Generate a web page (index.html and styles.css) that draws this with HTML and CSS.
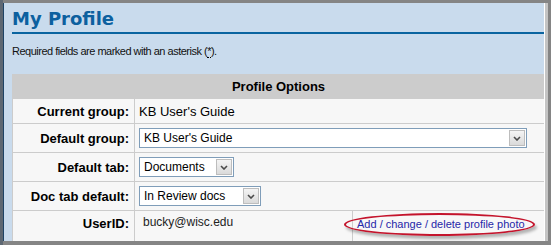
FILE: index.html
```html
<!DOCTYPE html>
<html lang="en">
<head>
    <meta charset="UTF-8">
    <title>My Profile</title>
    <link rel="stylesheet" href="styles.css">
</head>
<body>
    <div class="frame">
        <div class="bezel">
            <div class="page">
                <h1>My Profile</h1>
                <p class="note">Required fields are marked with an asterisk (<abbr title="required">*</abbr>).</p>

                <div class="options">
                    <div class="options-head">Profile Options</div>

                    <div class="label">Current group:</div>
                    <div class="value">KB User's Guide</div>

                    <div class="label">Default group:</div>
                    <div class="value">
                        <div class="select select-wide">
                            <span class="select-text">KB User's Guide</span>
                            <span class="select-btn">
                                <svg width="8" height="5" viewBox="0 0 8 5"><path d="M1 1 L4 4 L7 1" fill="none" stroke="#4a4a4a" stroke-width="1.6"/></svg>
                            </span>
                        </div>
                    </div>

                    <div class="label">Default tab:</div>
                    <div class="value">
                        <div class="select select-tab">
                            <span class="select-text">Documents</span>
                            <span class="select-btn">
                                <svg width="8" height="5" viewBox="0 0 8 5"><path d="M1 1 L4 4 L7 1" fill="none" stroke="#4a4a4a" stroke-width="1.6"/></svg>
                            </span>
                        </div>
                    </div>

                    <div class="label">Doc tab default:</div>
                    <div class="value">
                        <div class="select select-doc">
                            <span class="select-text">In Review docs</span>
                            <span class="select-btn">
                                <svg width="8" height="5" viewBox="0 0 8 5"><path d="M1 1 L4 4 L7 1" fill="none" stroke="#4a4a4a" stroke-width="1.6"/></svg>
                            </span>
                        </div>
                    </div>

                    <div class="label label-last">UserID:</div>
                    <div class="value-user">bucky@wisc.edu</div>
                    <div class="photo-cell">
                        <a class="photo-link" href="#">Add / change / delete profile photo</a>
                        <span class="highlight"></span>
                    </div>
                </div>
            </div>
        </div>
    </div>
</body>
</html>
```

FILE: styles.css
```css
* {
    margin: 0;
    padding: 0;
    box-sizing: border-box;
}

body {
    background: #858585;
    font-family: "Liberation Sans", Arial, sans-serif;
    color: #000;
}

.frame {
    height: 245px;
    padding: 3px 3px 4px 0;
    border-left: 3px solid #5e6873;
    background: #858585;
}

.bezel {
    height: 100%;
    border-right: 3px solid #c4c4c4;
}

.page {
    height: 100%;
    overflow: hidden;
    background: #c9dbed;
    border-left: 1px solid #1f4466;
    border-right: 1px solid #ffffff;
    padding: 5px 0 0 8px;
}

h1 {
    font-family: "DejaVu Sans", Verdana, sans-serif;
    font-size: 18px;
    line-height: 21px;
    font-weight: bold;
    color: #0c609f;
    padding-bottom: 3px;
    border-bottom: 2px solid #0a64a0;
}

.note {
    font-size: 11px;
    line-height: 13px;
    letter-spacing: -0.5px;
    margin: 11px 0 16px;
    color: #111;
}

.note abbr {
    text-decoration: none;
    border-bottom: 1px dotted #000;
    cursor: help;
}

/* profile options grid */
.options {
    display: grid;
    grid-template-columns: 122px 218px 1fr;
    border-left: 1px solid #cccccc;
    background: #f7f7f7;
    font-size: 13px;
}

.options-head {
    grid-column: 1 / -1;
    height: 25px;
    line-height: 25px;
    background: #cccccc;
    text-align: center;
    font-weight: bold;
}

.label {
    display: flex;
    align-items: center;
    justify-content: flex-end;
    height: 29px;
    padding-right: 5px;
    font-weight: bold;
    border-right: 1px solid #cccccc;
    border-bottom: 1px solid #cccccc;
}

.label:nth-child(2) {
    height: 25px;
}

.value {
    grid-column: 2 / 4;
    display: flex;
    align-items: center;
    padding-left: 4px;
    border-bottom: 1px solid #cccccc;
}

.label-last {
    height: 34px;
    align-items: flex-start;
    padding-top: 5px;
    line-height: 15px;
}

.value-user {
    font-size: 12px;
    line-height: 15px;
    padding: 4px 0 0 8px;
    color: #222;
    border-right: 1px solid #cccccc;
}

.photo-cell {
    position: relative;
    padding: 7px 0 0 4px;
    font-size: 11px;
    line-height: 13px;
}

.photo-link {
    color: #2626a8;
    text-decoration: none;
}

.highlight {
    position: absolute;
    left: -9px;
    top: 2px;
    width: 191px;
    height: 23px;
    border: 2px solid #c4142c;
    border-radius: 50%;
    box-shadow: 2px 3px 3px rgba(0, 0, 0, 0.28);
}

/* dropdowns */
.select {
    display: flex;
    align-items: center;
    height: 20px;
    background: #fff;
    border: 1px solid #7f9db9;
    font-size: 12px;
}

.select-wide {
    width: 388px;
}

.select-tab {
    width: 95px;
}

.select-doc {
    width: 122px;
}

.select-text {
    flex: 1;
    padding-left: 4px;
    white-space: nowrap;
}

.select-btn {
    display: flex;
    align-items: center;
    justify-content: center;
    width: 16px;
    height: 16px;
    margin-right: 1px;
    background: linear-gradient(#f4f4f4, #dadada);
    border: 1px solid #bdbdbd;
}
```
